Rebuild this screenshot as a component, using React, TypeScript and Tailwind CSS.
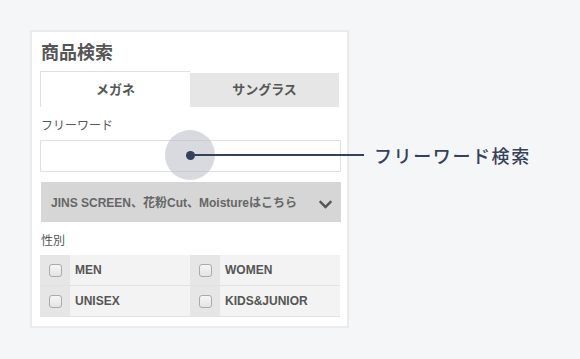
import { FaChevronDown } from 'react-icons/fa';

const genders = [
  ['MEN', 'WOMEN'],
  ['UNISEX', 'KIDS&JUNIOR'],
];

function Box() {
  return (
    <span className="block w-[13px] h-[13px] rounded-[3px] border border-[#aaa] bg-gradient-to-b from-[#f6f6f6] to-[#e4e4e4]" />
  );
}

export default function App() {
  return (
    <div
      className="relative w-[580px] h-[359px] bg-[#f5f6f8] pt-[30px] pl-[30px]"
      style={{ fontFamily: '"Liberation Sans", Arial, "Noto Sans CJK JP", sans-serif' }}
    >
      {/* Search panel */}
      <div className="w-[319px] h-[298px] bg-white border-2 border-[#ebebeb] pt-[8px] px-[8px]">
        <h2 className="text-[18px] leading-[26px] font-bold text-[#555] ml-[1px]">商品検索</h2>

        {/* Tabs */}
        <div className="flex items-end mt-[5px] h-[36px]">
          <div className="w-[151px] h-[36px] border-t border-l border-[#e0e0e0] flex items-center justify-center text-[13px] font-bold text-[#555]">
            メガネ
          </div>
          <div className="w-[150px] h-[34px] bg-[#e6e6e6] flex items-center justify-center text-[13px] font-bold text-[#555]">
            サングラス
          </div>
        </div>

        <div className="mt-[11px] ml-[1px] text-[12px] leading-[16px] text-[#555]">フリーワード</div>
        <div className="mt-[6px] w-[301px] h-[32px] border border-[#e0e0e0]" />

        {/* Dropdown */}
        <div className="mt-[10px] ml-[1px] w-[300px] h-[40px] bg-[#d6d6d6] flex items-center justify-between pl-[10px] pr-[8px]">
          <span className="text-[12px] font-bold text-[#666] pt-[2px]">JINS SCREEN、花粉Cut、Moistureはこちら</span>
          <FaChevronDown className="w-[15px] h-[15px] text-[#555] mt-[4px]" />
        </div>

        <div className="mt-[11px] ml-[1px] text-[12px] leading-[16px] text-[#555]">性別</div>

        {/* Gender checkboxes */}
        <div className="mt-[6px] w-[300px] border-b border-[#e2e2e2]">
          {genders.map((row, i) => (
            <div key={i} className={`flex h-[30px] ${i > 0 ? 'border-t border-[#e2e2e2] h-[31px]' : ''}`}>
              {row.map((label) => (
                <div key={label} className="flex w-[150px]">
                  <div className="w-[30px] bg-[#e6e6e6] flex items-center justify-center">
                    <Box />
                  </div>
                  <div className="flex-1 bg-[#f3f3f3] flex items-center pl-[5px] text-[12px] font-bold text-[#555]">
                    {label}
                  </div>
                </div>
              ))}
            </div>
          ))}
        </div>
      </div>

      {/* Annotation */}
      <div className="absolute left-[165px] top-[130px] w-[50px] h-[50px] rounded-full bg-[#b9bbc6]/55" />
      <div className="absolute left-[186px] top-[151px] w-[9px] h-[9px] rounded-full bg-[#35405a]" />
      <div className="absolute left-[190px] top-[154px] w-[174px] h-[2px] bg-[#35405a]" />
      <div
        className="absolute left-[374px] top-[143px] text-[18px] leading-[24px] font-medium text-[#35405a] tracking-[1.6px]"
        style={{ fontFamily: '"Noto Sans CJK JP", sans-serif' }}
      >
        フリーワード検索
      </div>
    </div>
  );
}
